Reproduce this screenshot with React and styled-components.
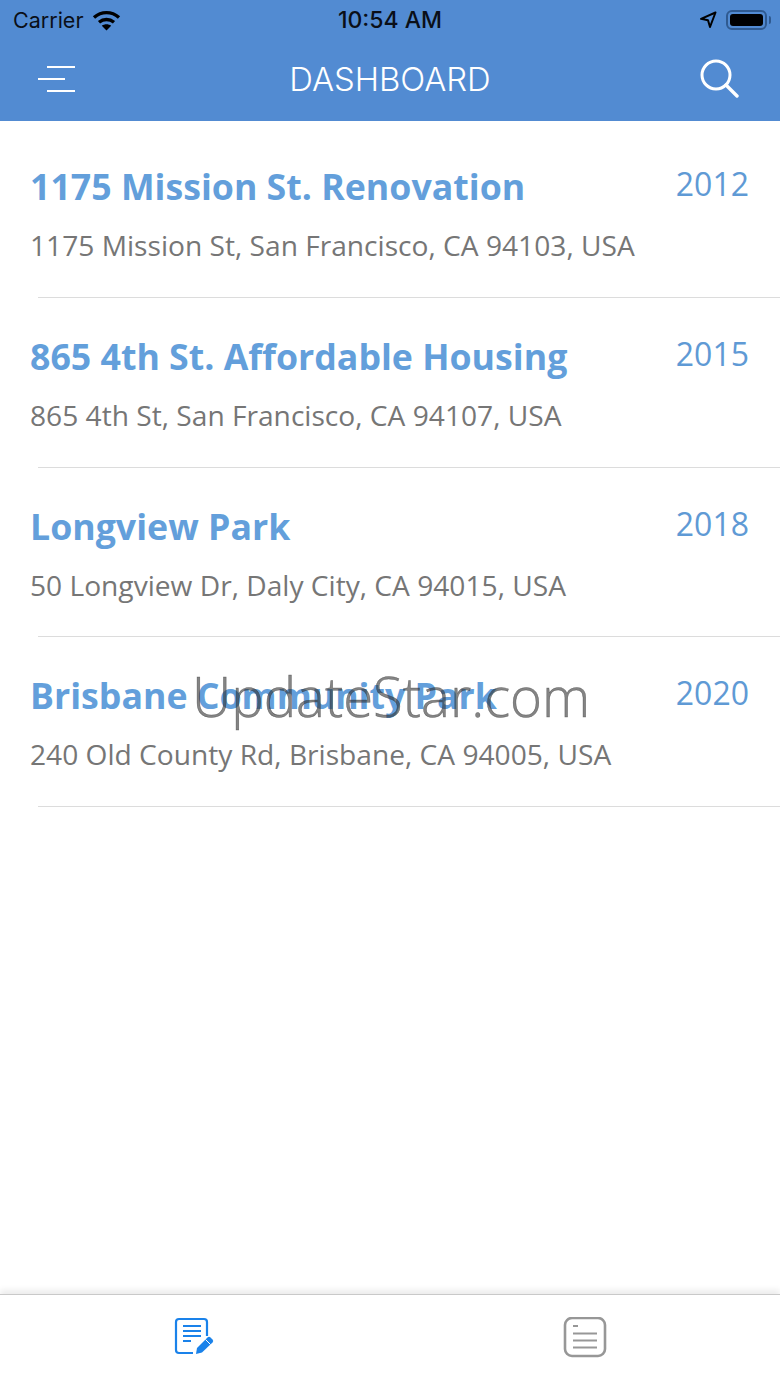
import styled, { createGlobalStyle } from "styled-components";

const projects = [
	{ name: "1175 Mission St. Renovation", address: "1175 Mission St, San Francisco, CA 94103, USA", year: 2012 },
	{ name: "865 4th St. Affordable Housing", address: "865 4th St, San Francisco, CA 94107, USA", year: 2015 },
	{ name: "Longview Park", address: "50 Longview Dr, Daly City, CA 94015, USA", year: 2018 },
	{ name: "Brisbane Community Park", address: "240 Old County Rd, Brisbane, CA 94005, USA", year: 2020 },
];

const App = () => {
	return (
		<Screen>
			<GlobalStyle />
			<Header>
				<StatusBar>
					<StatusSide>
						<Carrier>Carrier</Carrier>
						<svg width="29" height="21" viewBox="0 0 29 21">
							<path d="M2 7.5C9.5 1 19.5 1 27 7.5" fill="none" stroke="#000" strokeWidth="3.4" />
							<path d="M7 12.3C11.5 8.6 17.5 8.6 22 12.3" fill="none" stroke="#000" strokeWidth="3.4" />
							<path d="M14.5 20.5L9.8 15.8C12.5 13.8 16.5 13.8 19.2 15.8Z" fill="#000" />
						</svg>
					</StatusSide>
					<Clock>10:54 AM</Clock>
					<StatusSide $right>
						<svg width="18" height="18" viewBox="0 0 18 18">
							<path d="M16.5 1.5L2 7.8L9 9.2L11 16Z" fill="none" stroke="#000" strokeWidth="2" strokeLinejoin="round" />
						</svg>
						<Battery>
							<BatteryFill />
						</Battery>
					</StatusSide>
				</StatusBar>
				<NavBar>
					<IconSlot>
						<svg width="40" height="28" viewBox="0 0 40 28">
							<path d="M10 2H38M1 14H28M10 26H38" stroke="#fff" strokeWidth="2" fill="none" />
						</svg>
					</IconSlot>
					<NavTitle>DASHBOARD</NavTitle>
					<IconSlot $right>
						<svg width="40" height="40" viewBox="0 0 40 40">
							<circle cx="17" cy="16" r="14" fill="none" stroke="#fff" strokeWidth="3" />
							<path d="M27 26L38 37" stroke="#fff" strokeWidth="3.4" strokeLinecap="round" />
						</svg>
					</IconSlot>
				</NavBar>
			</Header>
			<List>
				{projects.map((project) => (
					<Row key={project.year}>
						<RowText>
							<Name>{project.name}</Name>
							<Address>{project.address}</Address>
						</RowText>
						<Year>{project.year}</Year>
					</Row>
				))}
			</List>
			<TabBar>
				<Tab>
					<svg width="42" height="40" viewBox="0 0 42 40">
						<path d="M19 36H5Q2 36 2 33V5Q2 2 5 2H30Q33 2 33 5V19" fill="none" stroke="#1a82ea" strokeWidth="2.2" />
						<path d="M9 9H27M9 14H27M9 19H27M9 24H17" stroke="#1a82ea" strokeWidth="2" fill="none" />
						<path d="M22 37L23 31L33.5 20.5Q35 19 36.5 20.5L38.5 22.5Q40 24 38.5 25.5L28 35.5Z" fill="#1a82ea" />
						<path d="M31.5 22.5L36.5 27.5" stroke="#fff" strokeWidth="1" />
					</svg>
				</Tab>
				<Tab>
					<svg width="44" height="42" viewBox="0 1 44 42">
						<rect x="2" y="2" width="40" height="38" rx="7" fill="none" stroke="#979797" strokeWidth="2.6" />
						<path d="M10 10H15M10 17.5H34M10 24.5H34M10 31.5H34" stroke="#979797" strokeWidth="2.2" fill="none" />
					</svg>
				</Tab>
			</TabBar>
			<Watermark>UpdateStar.com</Watermark>
		</Screen>
	);
};

export default App;

const GlobalStyle = createGlobalStyle`
	html, body {
		margin: 0;
		padding: 0;
		background: #fff;
	}
`;

const Screen = styled.div`
	position: relative;
	width: 780px;
	height: 1387px;
	display: flex;
	flex-direction: column;
	overflow: hidden;
	background: #fff;
	font-family: "Open Sans", sans-serif;
`;

const Header = styled.header`
	height: 121px;
	flex-shrink: 0;
	background: #528bd2;
`;

const StatusBar = styled.div`
	height: 40px;
	padding: 0 13px;
	display: grid;
	grid-template-columns: 1fr auto 1fr;
	align-items: center;
	font-family: Inter, sans-serif;
	color: #0a0f18;
`;

const StatusSide = styled.div`
	display: flex;
	align-items: center;
	gap: 9px;
	justify-content: ${(props) => (props.$right ? "flex-end" : "flex-start")};
`;

const Carrier = styled.span`
	font-size: 21.5px;
`;

const Clock = styled.span`
	font-size: 23px;
	font-weight: 500;
`;

const Battery = styled.div`
	position: relative;
	width: 41px;
	height: 20px;
	padding: 2px;
	box-sizing: border-box;
	border: 2px solid #2f5a90;
	border-radius: 6px;

	&::after {
		content: "";
		position: absolute;
		right: -6px;
		top: 4px;
		width: 2px;
		height: 8px;
		background: #2f5a90;
		border-radius: 0 2px 2px 0;
	}
`;

const BatteryFill = styled.div`
	width: 100%;
	height: 100%;
	background: #000;
	border-radius: 3px;
`;

const NavBar = styled.div`
	height: 81px;
	padding: 0 37px 4px;
	box-sizing: border-box;
	display: grid;
	grid-template-columns: 1fr auto 1fr;
	align-items: center;
`;

const IconSlot = styled.div`
	display: flex;
	justify-content: ${(props) => (props.$right ? "flex-end" : "flex-start")};
	padding-right: ${(props) => (props.$right ? "4px" : "0")};
`;

const NavTitle = styled.div`
	font-family: Inter, sans-serif;
	font-size: 32.8px;
	font-weight: 300;
	color: #fff;
`;

const List = styled.main`
	flex: 1;
	padding-top: 7.3px;
`;

const Row = styled.div`
	height: 169.67px;
	box-sizing: border-box;
	margin-left: 38px;
	padding: 33px 31px 0 0;
	display: flex;
	justify-content: space-between;
	align-items: flex-start;
	border-bottom: 1px solid #dcdcdc;
`;

const RowText = styled.div`
	margin-left: -8px;
`;

const Name = styled.div`
	font-size: 35.7px;
	line-height: 50px;
	font-weight: 700;
	color: #639fdb;
`;

const Address = styled.div`
	margin-top: 16px;
	font-size: 28.15px;
	line-height: 36px;
	color: #767676;
`;

const Year = styled.div`
	margin-top: 1px;
	font-size: 32px;
	line-height: 44px;
	color: #5f9ad5;
`;

const TabBar = styled.nav`
	height: 92px;
	flex-shrink: 0;
	display: grid;
	grid-template-columns: 1fr 1fr;
	background: #fff;
	border-top: 1px solid #c9c9c9;
	box-shadow: 0 -4px 6px rgba(0, 0, 0, 0.08);
`;

const Tab = styled.div`
	display: flex;
	justify-content: center;
	align-items: flex-start;
	padding-top: 22px;
`;

const Watermark = styled.div`
	position: absolute;
	left: 192px;
	top: 659px;
	font-size: 54.5px;
	line-height: 74px;
	font-weight: 300;
	color: rgba(50, 50, 50, 0.6);
	-webkit-text-stroke: 0.5px rgba(50, 50, 50, 0.6);
	white-space: nowrap;
`;
